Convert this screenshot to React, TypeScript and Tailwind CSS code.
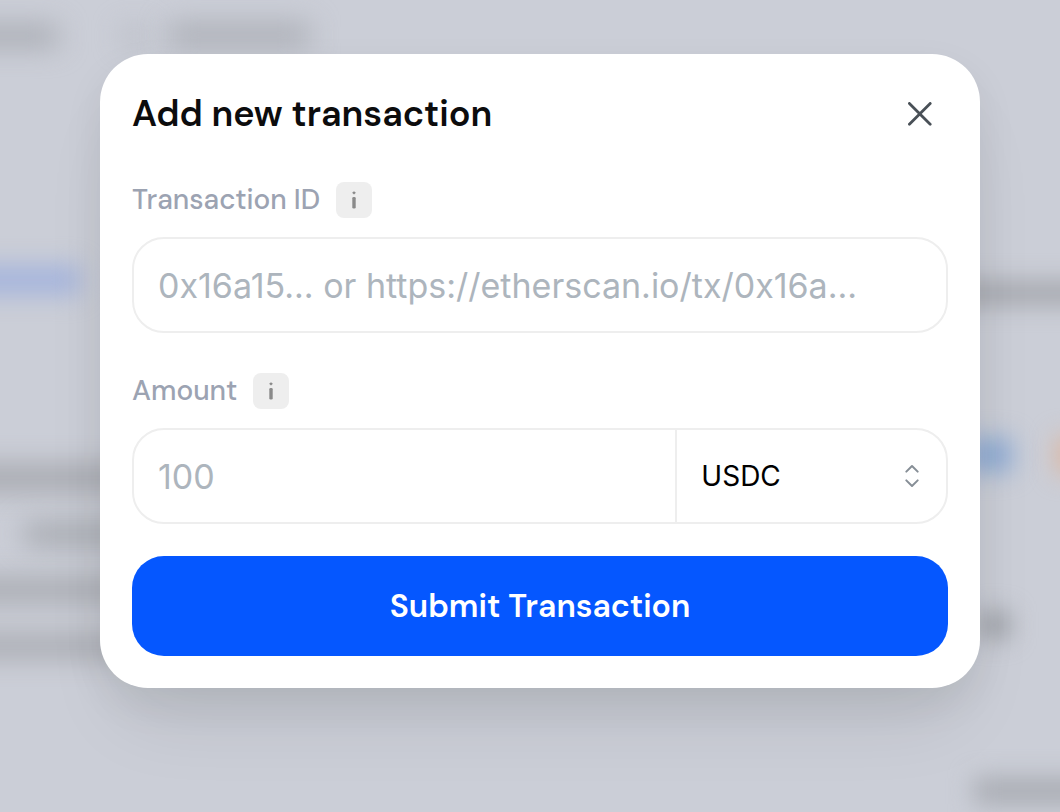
import React, { useId, useState } from "react";

interface BlurSpot {
  className: string;
}

// remains of the page that sits behind the overlay
const spots: BlurSpot[] = [
  { className: "-left-[40px] top-[26px] w-[98px] h-[20px] bg-[#a5a8af] blur-[14px]" },
  { className: "left-[122px] top-[28px] w-[24px] h-[16px] bg-[#b4b7bf] blur-[14px]" },
  { className: "left-[168px] top-[24px] w-[142px] h-[22px] bg-[#a9acb3] blur-[14px]" },
  { className: "-left-[40px] top-[265px] w-[120px] h-[30px] bg-[#a5b4dc] blur-[12px]" },
  { className: "-left-[40px] top-[466px] w-[210px] h-[24px] bg-[#a2a4aa] blur-[14px]" },
  { className: "left-[24px] top-[524px] w-[130px] h-[20px] bg-[#a0a3a9] blur-[14px]" },
  { className: "-left-[40px] top-[580px] w-[200px] h-[20px] bg-[#a0a2a8] blur-[14px]" },
  { className: "-left-[40px] top-[636px] w-[200px] h-[20px] bg-[#a2a4aa] blur-[14px]" },
  { className: "-right-[40px] top-[282px] w-[150px] h-[22px] bg-[#a2a4aa] blur-[12px]" },
  { className: "right-[48px] top-[438px] w-[44px] h-[34px] bg-[#8eabd4] blur-[12px]" },
  { className: "-right-[32px] top-[436px] w-[36px] h-[38px] bg-[#dcb8a4] blur-[12px]" },
  { className: "right-[50px] top-[612px] w-[32px] h-[26px] bg-[#9c9fa5] blur-[12px]" },
  { className: "-right-[40px] top-[778px] w-[126px] h-[26px] bg-[#a8abb2] blur-[12px]" },
];

const InfoButton: React.FC<{ label: string }> = ({ label }) => (
  <button
    type="button"
    aria-label={label}
    className="flex size-9 items-center justify-center rounded-lg bg-[#eeeeee]"
  >
    <svg width="36" height="36" viewBox="0 0 36 36" fill="#8a8a8a">
      <path d="M18 9.2l1.9 1.6-1.9 1.7-1.9-1.7z" />
      <rect x="16.3" y="15" width="3.4" height="11.6" rx="1.3" />
    </svg>
  </button>
);

interface FieldProps {
  id: string;
  label: string;
  info: string;
  children: React.ReactNode;
}

const Field: React.FC<FieldProps> = ({ id, label, info, children }) => (
  <div className="mt-10 flex flex-col gap-[19px]">
    <div className="flex h-9 items-center gap-4">
      <label htmlFor={id} className="text-[28px] font-medium text-[#9ca3b2]">
        {label}
      </label>
      <InfoButton label={info} />
    </div>
    {children}
  </div>
);

const App: React.FC = () => {
  const [txId, setTxId] = useState("");
  const [amount, setAmount] = useState("");
  const [currency, setCurrency] = useState("USDC");
  const txInput = useId();
  const amountInput = useId();

  return (
    <div className="relative min-h-screen overflow-hidden bg-[#cbced7] font-['DM_Sans',Inter,sans-serif]">
      <div aria-hidden="true">
        {spots.map((spot, index) => (
          <div key={index} className={`absolute ${spot.className}`} />
        ))}
      </div>

      <div className="relative pt-[54px] pr-20 pb-[124px] pl-[100px]">
        <form
          role="dialog"
          aria-labelledby="dialog-title"
          onSubmit={(e) => e.preventDefault()}
          className="rounded-[48px] bg-white p-8 shadow-[0_48px_80px_-24px_rgba(20,24,16,0.1),0_16px_40px_rgba(20,24,16,0.07)]"
        >
          <div className="flex h-14 items-center justify-between">
            <h1 id="dialog-title" className="text-4xl font-semibold text-[#0c0c0d]">
              Add new transaction
            </h1>
            <button
              type="button"
              aria-label="Close"
              className="flex size-14 items-center justify-center text-[#495057]"
            >
              <svg
                width="24"
                height="24"
                viewBox="0 0 24 24"
                fill="none"
                stroke="currentColor"
                strokeWidth="2.8"
                strokeLinecap="round"
              >
                <path d="M1.4 1.4l20.8 20.8M22.2 1.4l-20.8 20.8" />
              </svg>
            </button>
          </div>

          <Field id={txInput} label="Transaction ID" info="About transaction ID">
            <input
              id={txInput}
              type="text"
              value={txId}
              onChange={(e) => setTxId(e.target.value)}
              placeholder="0x16a15... or https://etherscan.io/tx/0x16a..."
              className="h-24 w-full rounded-[32px] border-2 border-[#eeeeee] px-6 font-[Inter,sans-serif] text-[34px] text-black outline-none placeholder:text-[#adb5bd]"
            />
          </Field>

          <Field id={amountInput} label="Amount" info="About amount">
            <div className="flex h-24 rounded-[32px] border-2 border-[#eeeeee] font-[Inter,sans-serif]">
              <input
                id={amountInput}
                type="text"
                inputMode="decimal"
                value={amount}
                onChange={(e) => setAmount(e.target.value)}
                placeholder="100"
                className="min-w-0 flex-1 bg-transparent px-6 text-[34px] text-black outline-none placeholder:text-[#adb5bd]"
              />
              <div className="relative w-1/3 border-l-2 border-[#eeeeee]">
                <select
                  aria-label="Currency"
                  value={currency}
                  onChange={(e) => setCurrency(e.target.value)}
                  className="size-full appearance-none bg-transparent px-6 text-[28px] text-black outline-none"
                >
                  <option>USDC</option>
                  <option>USDT</option>
                  <option>ETH</option>
                </select>
                <svg
                  className="pointer-events-none absolute inset-y-0 right-6 my-auto"
                  width="20"
                  height="24"
                  viewBox="0 0 20 24"
                  fill="none"
                  stroke="#868e96"
                  strokeWidth="2"
                  strokeLinecap="round"
                  strokeLinejoin="round"
                >
                  <path d="M4.3 7.6l5.7-5.6 5.7 5.6M4.3 16.4l5.7 5.6 5.7-5.6" />
                </svg>
              </div>
            </div>
          </Field>

          <button
            type="submit"
            className="mt-8 h-[100px] w-full rounded-[32px] bg-[#0557ff] text-[32px] font-semibold text-white"
          >
            Submit Transaction
          </button>
        </form>
      </div>
    </div>
  );
};

export default App;
